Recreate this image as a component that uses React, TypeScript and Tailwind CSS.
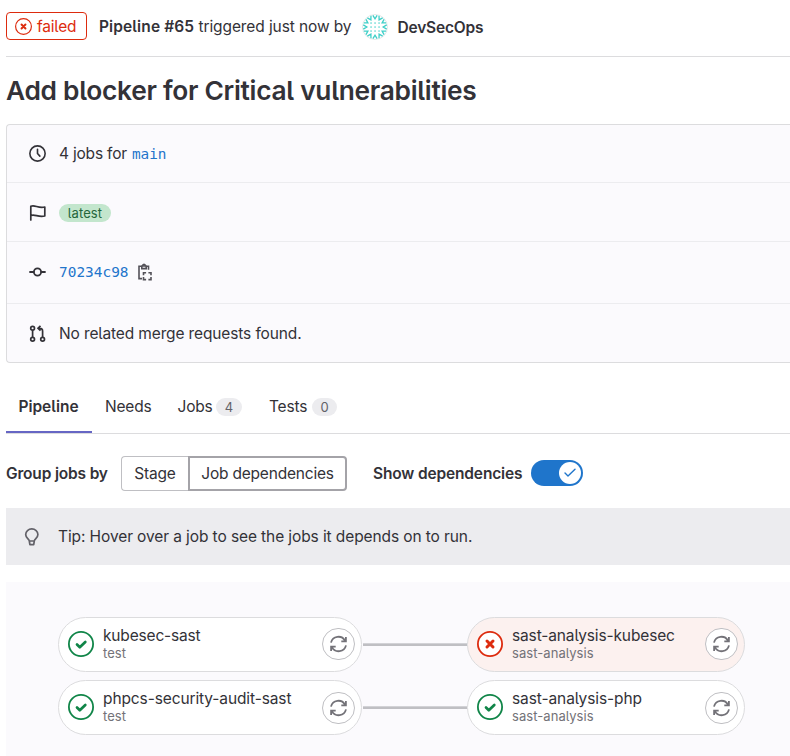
import React from "react";

function StatusIcon({ failed = false, size = 26 }: { failed?: boolean; size?: number }) {
  const color = failed ? "#dd2b0e" : "#108548";
  return (
    <svg width={size} height={size} viewBox="0 0 26 26" fill="none" className="shrink-0">
      <circle cx="13" cy="13" r="12.1" fill="#fff" stroke={color} strokeWidth="1.8" />
      {failed ? (
        <path d="M10 10l6 6M16 10l-6 6" stroke={color} strokeWidth="3" strokeLinecap="round" />
      ) : (
        <path d="M9 13.5l2.8 2.8 5.5-5.3" stroke={color} strokeWidth="2.7" strokeLinecap="round" strokeLinejoin="round" />
      )}
    </svg>
  );
}

function RetryButton({ className }: { className: string }) {
  return (
    <button className={`flex h-8 w-[33px] shrink-0 items-center justify-center rounded-full border border-[#bfbfc3] bg-white pr-px ${className}`}>
      <svg width="17" height="18" viewBox="0 0 17 18" fill="none" stroke="#737278" strokeWidth="1.8">
        <path d="M1 7.6A7.6 7.6 0 0 1 15 5.6M15.9 2v4.3h-4.6M16 10.4A7.6 7.6 0 0 1 2 12.4M1.1 16v-4.3h4.6" />
      </svg>
    </button>
  );
}

type JobProps = { name: string; stage: string; failed?: boolean; width: string; nameClass: string; retryClass: string };

function Job({ name, stage, failed, width, nameClass, retryClass }: JobProps) {
  return (
    <div className={`flex h-[55px] shrink-0 items-center rounded-full border border-[#dcdcde] pb-px pl-[9px] pr-[6px] ${width} ${failed ? "bg-[#fcf1ef]" : "bg-white"}`}>
      <StatusIcon failed={failed} />
      <div className="ml-[9px] flex-1 whitespace-nowrap pb-px">
        <div className={`h-[19px] text-[15.5px] leading-[19px] ${nameClass}`}>{name}</div>
        <div className="h-[17px] text-[13px] leading-[17px] tracking-[0.06px] text-[#737278]">{stage}</div>
      </div>
      <RetryButton className={retryClass} />
    </div>
  );
}

function Connector() {
  return <div className="ml-px h-[3px] w-[104px] border-t border-[#d2d2d6] bg-[#bfbfc3]" />;
}

function Avatar() {
  const dots = [9, 13, 17];
  const rim = Array.from({ length: 12 }, (_, i) => i * 30);
  return (
    <svg width="26" height="26" viewBox="0 0 26 26" className="ml-[11px] mt-px shrink-0" fill="none">
      <circle cx="13" cy="13" r="12.5" fill="#fff" stroke="#e4e8e8" />
      {rim.map((a) => (
        <path key={a} d="M10.9 1.3L13 4.8l2.1-3.5" transform={`rotate(${a} 13 13)`} stroke="#3ecfc8" strokeWidth="1.3" />
      ))}
      {dots.map((x) => dots.map((y) => <rect key={`${x}-${y}`} x={x - 0.6} y={y - 0.6} width="1.3" height="1.3" fill="#3ecfc8" />))}
    </svg>
  );
}

export default function App() {
  return (
    <div className="h-[756px] w-[790px] overflow-hidden bg-white pl-[6px] font-['Inter','Liberation_Sans',sans-serif] text-[15.5px] tracking-[-0.13px] text-[#333238] [font-feature-settings:'cv05'] [&_span]:whitespace-nowrap">
      <header className="flex h-[57px] items-center border-b border-[#dcdcde] pb-[4px]">
        <span className="flex h-[28px] w-[81px] items-center rounded-[4px] border border-[#dd2b0e] pl-[8px] text-[#dd2b0e]">
          <StatusIcon failed size={17} />
          <span className="ml-[5px] pt-px tracking-[-0.2px]">failed</span>
        </span>
        <span className="ml-[12px] w-[99.5px] pt-px font-semibold tracking-[0.12px]">Pipeline #65</span>
        <span className="pt-px tracking-[-0.1px]">triggered just now by</span>
        <Avatar />
        <span className="ml-[9px] pt-[3px] font-semibold tracking-[-0.2px]">DevSecOps</span>
      </header>

      <h1 className="flex h-[67px] items-center text-[26.3px] font-semibold tracking-[-0.28px]"><span>Add blocker for Critical vulnerabilities</span></h1>

      <section className="h-[239px] rounded-l-[4px] border border-r-0 border-[#dcdcde] bg-[#fbfafd]">
        <div className="flex h-[58px] items-center border-b border-[#ececef] pl-[22px]">
          <svg width="17" height="17" viewBox="0 0 18 18" fill="none" stroke="#333238" strokeWidth="1.7" strokeLinecap="round"><circle cx="9" cy="9" r="8.1" /><path d="M9 4.6V9l2.5 2.8" /></svg>
          <span className="ml-[13px] tracking-[-0.2px]">4 jobs for</span>
          <span className="ml-[5px] pt-[2px] font-['DejaVu_Sans_Mono',monospace] text-[14.4px] tracking-normal text-[#1f75cb]">main</span>
        </div>
        <div className="flex h-[59px] items-center border-b border-[#ececef] pl-[22px]">
          <svg width="18" height="18" viewBox="0 0 18 18" fill="none" stroke="#333238" strokeWidth="1.7" strokeLinecap="round" strokeLinejoin="round" className="mt-px"><path d="M1.8 16V2.3C6 0.4 9 4.7 15.8 3v9C9 13.8 6 9.5 1.8 11.5" /></svg>
          <span className="ml-[12px] mt-[2px] flex h-[18px] w-[52px] items-center justify-center rounded-full bg-[#c3e6cd] text-[13px] text-[#24663b]"><span className="pt-px tracking-[0.12px]">latest</span></span>
        </div>
        <div className="flex h-[62px] items-center border-b border-[#ececef] pl-[22px]">
          <svg width="17" height="18" viewBox="0 0 17 18" fill="none" stroke="#333238" strokeWidth="1.8" strokeLinecap="round" className="mb-[2px]"><circle cx="8.5" cy="9" r="3.6" /><path d="M1 9h3.7M12.3 9H16" /></svg>
          <span className="ml-[13px] font-['DejaVu_Sans_Mono',monospace] text-[14.45px] tracking-normal text-[#1f75cb]">70234c98</span>
          <svg width="16" height="18" viewBox="0 0 16 18" fill="none" stroke="#535158" strokeWidth="1.6" className="mb-px ml-[8.5px]"><path d="M4.5 3.2H2v12.4h3M9 3.2h2.5v3.6M4.8 3h4.4v2.6H4.8zM5.6 3a1.4 1.7 0 0 1 2.8 0" /><path d="M6.5 12.2v-2.4h2.6M11.4 9.8H14v2.4M14 14v2.6h-2.6M9.1 16.6H6.5V14" /></svg>
        </div>
        <div className="flex h-[58px] items-center pl-[22px]">
          <svg width="18" height="18" viewBox="0 0 18 18" fill="none" stroke="#333238" strokeWidth="1.7" className="mt-[2px]"><circle cx="3.6" cy="3.3" r="1.9" /><circle cx="3.6" cy="14.3" r="1.9" /><circle cx="13.6" cy="14.3" r="1.9" /><path d="M3.6 5.2v7.2M13.6 12.4V6q0-2.7-2.6-2.7H9.2M11.5 0.9L9 3.3l2.5 2.4" /></svg>
          <span className="ml-[12px] pt-[2px] tracking-[-0.13px]">No related merge requests found.</span>
        </div>
      </section>

      <nav className="mt-[18px] flex h-[53px] border-b border-[#dcdcde]">
        <div className="flex w-[86px] items-center justify-center border-b-2 border-[#6666c4] pr-px font-semibold"><span className="pt-px tracking-[0px]">Pipeline</span></div>
        <div className="ml-[13px] flex items-center"><span className="w-[72.5px] tracking-[-0.2px]">Needs</span></div>
        <div className="flex items-center"><span className="w-[38.5px] tracking-[-0.2px]">Jobs</span><span className="flex h-[18px] w-[26px] items-center justify-center rounded-full bg-[#ececef] text-[13px] text-[#626168]"><span className="pt-px">4</span></span></div>
        <div className="ml-[27px] flex items-center"><span className="w-[43px] tracking-[-0.2px]">Tests</span><span className="flex h-[18px] w-[25px] items-center justify-center rounded-full bg-[#ececef] text-[13px] text-[#626168]"><span className="pt-px">0</span></span></div>
      </nav>

      <div className="mt-[22px] flex h-[35px] items-center">
        <span className="w-[115px] font-semibold tracking-[-0.17px]">Group jobs by</span>
        <button className="flex h-[35px] w-[67px] items-center justify-center rounded-l-[4px] border border-r-0 border-[#bfbfc3]"><span className="tracking-[-0.2px]">Stage</span></button>
        <button className="flex h-[35px] w-[159px] items-center justify-center rounded-r-[4px] border-2 border-[#a4a3a8]"><span className="tracking-[-0.2px]">Job dependencies</span></button>
        <span className="ml-[26px] w-[158px] font-semibold tracking-[-0.15px]">Show dependencies</span>
        <div className="mb-px flex h-[26px] w-[52px] items-center justify-end rounded-full bg-[#1f75cb] pr-[2px]">
          <div className="flex h-[22px] w-[22px] items-center justify-center rounded-full bg-white">
            <svg width="12" height="10" viewBox="0 0 12 10" fill="none" stroke="#1f75cb" strokeWidth="1.4" strokeLinecap="round" strokeLinejoin="round"><path d="M1 5l3 3L11 1.3" /></svg>
          </div>
        </div>
      </div>

      <div className="mt-[17px] flex h-[57px] items-center bg-[#ececef] pl-[18px]">
        <svg width="16" height="18" viewBox="0 0 16 18" fill="none" stroke="#626168" strokeWidth="1.7" strokeLinejoin="round"><path d="M5.3 13C5 10.8 1.7 9.9 1.7 6.5a6.1 5.6 0 0 1 12.2 0c0 3.4-3.3 4.3-3.6 6.5zM5.3 13l.6 3.7h3.8l.6-3.7" /></svg>
        <span className="ml-[18px] tracking-[-0.1px]">Tip: Hover over a job to see the jobs it depends on to run.</span>
      </div>

      <main className="mt-[17px] flex h-[174px] flex-col gap-[8px] bg-[#fbfafd] pl-[52px] pt-[35px]">
        <div className="flex items-center">
          <Job name="kubesec-sast" stage="test" width="w-[304px]" nameClass="tracking-[-0.17px]" retryClass="" />
          <Connector />
          <Job name="sast-analysis-kubesec" stage="sast-analysis" failed width="w-[278px]" nameClass="tracking-[-0.14px]" retryClass="" />
        </div>
        <div className="flex items-center">
          <Job name="phpcs-security-audit-sast" stage="test" width="w-[304px]" nameClass="tracking-[-0.11px]" retryClass="mt-[2px]" />
          <Connector />
          <Job name="sast-analysis-php" stage="sast-analysis" width="w-[278px]" nameClass="tracking-[-0.1px]" retryClass="mt-[2px]" />
        </div>
      </main>
    </div>
  );
}
